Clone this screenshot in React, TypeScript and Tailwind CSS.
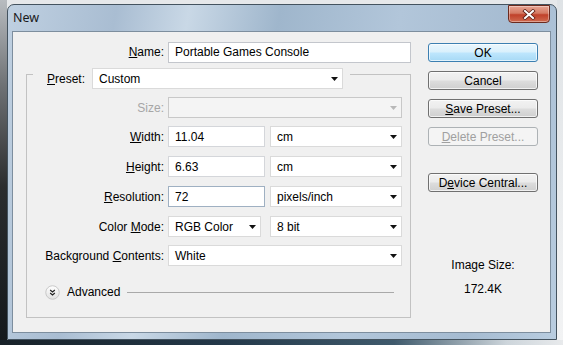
import type { ReactNode } from "react";

function Arrow({ disabled = false }: { disabled?: boolean }) {
  return (
    <svg width="7" height="4" viewBox="0 0 7 4" className="shrink-0">
      <path d="M0 0h7L3.5 4z" fill={disabled ? "#b8b8b8" : "#111"} />
    </svg>
  );
}

function Combo({ value, className = "", disabled = false }: { value?: string; className?: string; disabled?: boolean }) {
  return (
    <div
      className={`flex h-[21px] items-center justify-between border pl-[6px] pr-[4px] ${
        disabled ? "border-[#c8c8c8] bg-[#f4f4f4]" : "border-[#dadada] bg-white"
      } ${className}`}
    >
      <span>{value}</span>
      <Arrow disabled={disabled} />
    </div>
  );
}

function Field({ value, className = "" }: { value: string; className?: string }) {
  return (
    <div className={`flex h-[21px] items-center border bg-white pl-[6px] ${className}`}>{value}</div>
  );
}

function Row({ label, children, className = "" }: { label: ReactNode; children: ReactNode; className?: string }) {
  return (
    <div className={`flex h-[21px] items-center ${className}`}>
      <div className="w-[137px] whitespace-nowrap text-right">{label}</div>
      <div className="ml-[4px] flex items-center">{children}</div>
    </div>
  );
}

function Button({ children, variant = "normal", className = "" }: { children: ReactNode; variant?: "normal" | "default" | "disabled"; className?: string }) {
  const look =
    variant === "default"
      ? "border-[#3c7fb1] bg-[linear-gradient(#eaf6fd_0%,#d9f0fc_48%,#bee6fd_52%,#a7d9f5_100%)] shadow-[inset_0_0_0_1px_#ffffffaa]"
      : variant === "disabled"
        ? "border-[#adb2b5] bg-[#f4f4f4] text-[#a0a0a0]"
        : "border-[#707070] bg-[linear-gradient(#f2f2f2_0%,#ebebeb_48%,#dddddd_52%,#cfcfcf_100%)] shadow-[inset_0_0_0_1px_#ffffffb0]";
  return (
    <div className={`flex h-[19px] w-[110px] items-center justify-center rounded-[3px] border ${look} ${className}`}>
      {children}
    </div>
  );
}

function AdvancedIcon() {
  return (
    <svg width="15" height="15" viewBox="0 0 16 16" className="shrink-0">
      <defs>
        <linearGradient id="adv" x1="0" y1="0" x2="0" y2="1">
          <stop offset="0" stopColor="#ffffff" />
          <stop offset="1" stopColor="#e0e0e0" />
        </linearGradient>
      </defs>
      <circle cx="8" cy="8" r="7.2" fill="url(#adv)" stroke="#c0c0c0" strokeWidth="0.9" />
      <path d="M5.5 5.3 8 7.5l2.5-2.2M5.5 8.5 8 10.7l2.5-2.2" fill="none" stroke="#222" strokeWidth="1.2" />
    </svg>
  );
}

function CloseButton() {
  return (
    <div className="flex h-[18px] w-[42px] items-center justify-center rounded-b-[4px] border border-[#6b2a1e] bg-[linear-gradient(#e8a493_0%,#d47a63_45%,#c0412a_55%,#cf6a4f_100%)] shadow-[inset_0_0_0_1px_#ffffff60]">
      <svg width="14" height="11" viewBox="0 0 14 11">
        <path d="M3 2l8 7M11 2l-8 7" stroke="#5b1e14" strokeWidth="3.6" strokeLinecap="square" />
        <path d="M3 2l8 7M11 2l-8 7" stroke="#fff" strokeWidth="2" strokeLinecap="square" />
      </svg>
    </div>
  );
}

export default function App() {
  return (
    <div className="flex h-[345px] w-[563px] flex-col overflow-hidden bg-[#e6e8ea] font-['Liberation_Sans',Arial,sans-serif] text-[12px] text-black">
      <div className="flex h-[340px]">
        <div className="w-[7px] bg-[linear-gradient(#b8bcc0_0%,#6f7275_25%,#2b2d2f_55%,#15191c_100%)]" />

        <div className="mt-[4px] flex h-[336px] w-[550px] flex-col rounded-t-[7px] border border-[#44535f] bg-[linear-gradient(100deg,#bfd0e1_0%,#a9bdd2_18%,#c9d8e6_30%,#9fb6cc_45%,#b2c6da_65%,#a5bbd1_85%,#b9cde0_100%)]">
          <div className="flex h-[26px] items-start justify-between">
            <span className="mt-[5px] pl-[5px] font-['Noto_Sans',sans-serif] text-[12.5px] leading-[16px] text-[#1a1a1a]">
              New
            </span>
            <div className="mr-[6px]">
              <CloseButton />
            </div>
          </div>

          <div className="ml-[4px] mr-[5px] flex h-[302px] border border-[#7d8e9e] bg-[#f0f0f0]">
            <div className="flex w-[398px] flex-col">
              <div className="mt-[10px] flex h-[20px] items-center">
                <div className="w-[151px] text-right">
                  <u>N</u>ame:
                </div>
                <Field value="Portable Games Console" className="ml-[4px] h-[20px] w-[243px] border-[#c3c6cc]" />
              </div>

              <fieldset className="ml-[13px] -mt-[3px] w-[385px] border border-[#c2c2c2] pb-[17px]">
                <legend className="ml-[6px] flex items-center pl-[14px] pr-[7px] pt-[9px]">
                  <span className="w-[45px]">
                    <u>P</u>reset:
                  </span>
                  <Combo value="Custom" className="w-[251px]" />
                </legend>

                <Row className="mt-[8px]" label={<span className="text-[#a6a6a6]">Size:</span>}>
                  <Combo disabled className="w-[234px]" />
                </Row>
                <Row className="mt-[8px]" label={<><u>W</u>idth:</>}>
                  <Field value="11.04" className="w-[97px] border-[#d4d6da]" />
                  <Combo value="cm" className="ml-[5px] w-[132px]" />
                </Row>
                <Row className="mt-[9px]" label={<><u>H</u>eight:</>}>
                  <Field value="6.63" className="w-[97px] border-[#d4d6da]" />
                  <Combo value="cm" className="ml-[5px] w-[132px]" />
                </Row>
                <Row className="mt-[9px]" label={<><u>R</u>esolution:</>}>
                  <Field value="72" className="w-[97px] border-[#9fb0c2]" />
                  <Combo value="pixels/inch" className="ml-[5px] w-[132px]" />
                </Row>
                <Row className="mt-[9px]" label={<>Color <u>M</u>ode:</>}>
                  <Combo value="RGB Color" className="w-[93px]" />
                  <Combo value="8 bit" className="ml-[9px] w-[132px]" />
                </Row>
                <Row className="mt-[8px]" label={<>Background <u>C</u>ontents:</>}>
                  <Combo value="White" className="w-[234px]" />
                </Row>

                <div className="mt-[18px] flex h-[16px] items-center pl-[18px] pr-[16px]">
                  <AdvancedIcon />
                  <span className="ml-[7px]">Advanced</span>
                  <div className="ml-[7px] h-px flex-1 bg-[#a9a9a9]" />
                </div>
              </fieldset>
            </div>

            <div className="ml-[17px] flex w-[110px] flex-col items-center">
              <Button variant="default" className="mt-[11px]">OK</Button>
              <Button className="mt-[9px]">Cancel</Button>
              <Button className="mt-[9px]">
                <span>
                  <u>S</u>ave Preset...
                </span>
              </Button>
              <Button variant="disabled" className="mt-[9px]">
                <span>
                  <u>D</u>elete Preset...
                </span>
              </Button>
              <Button className="mt-[27px]">
                <span>
                  D<u>e</u>vice Central...
                </span>
              </Button>
              <div className="mt-[66px] leading-[14px]">Image Size:</div>
              <div className="mt-[10px] leading-[14px]">172.4K</div>
            </div>
          </div>
        </div>

        <div className="flex-1 bg-[linear-gradient(#dfe3e6,#f2f3f4)]" />
      </div>
      <div className="h-[5px] bg-[linear-gradient(90deg,#182229_0%,#24394a_40%,#3f5a6c_70%,#cdd5db_90%,#e8eaec_100%)]" />
    </div>
  );
}
